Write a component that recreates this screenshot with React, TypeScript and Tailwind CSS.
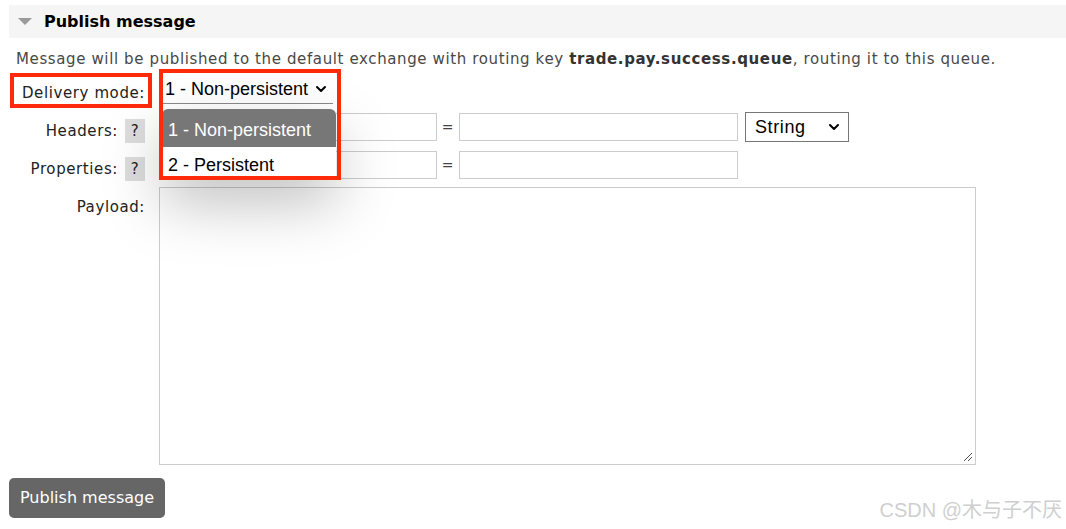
import { ChevronDown } from "lucide-react";

const verdana = "font-['DejaVu_Sans',Verdana,sans-serif]";
const arial = "font-['Liberation_Sans',Arial,sans-serif]";

function Help() {
  return (
    <span className="flex h-6 w-5 items-center justify-center bg-[#dddddd] text-[15px] text-[#222]">?</span>
  );
}

function PairInputs({ withType }: { withType?: boolean }) {
  return (
    <div className="flex items-center">
      <div className="h-[28px] w-[278px] border border-[#cccccc] bg-white" />
      <span className="w-[22px] text-center text-[14px] text-[#444]">=</span>
      <div className="h-[28px] w-[279px] border border-[#cccccc] bg-white" />
      {withType && (
        <div className={`${arial} ml-[7px] flex h-[30px] w-[104px] items-center justify-between border border-[#767676] bg-white pl-[9px] pr-[6px] text-[18px] text-black`}>
          String
          <ChevronDown className="h-4 w-4" strokeWidth={3} />
        </div>
      )}
    </div>
  );
}

export default function App() {
  return (
    <div className={`${verdana} relative h-[529px] w-[1066px] overflow-hidden bg-white text-[#484848]`}>
      <div className="pl-[9px] pt-[5px]">
        <div className="flex h-[33px] items-center bg-[#f5f5f5] pl-[9px]">
          <svg width="14" height="8" viewBox="0 0 14 8" className="mt-[1px]">
            <polygon points="0,0 14,0 7,7" fill="#9a9a9a" />
          </svg>
          <span className="ml-[12px] text-[16px] font-bold text-black">Publish message</span>
        </div>
        <p className="mt-[11px] pl-[7px] text-[15px] leading-[21px] tracking-[0.62px]">
          Message will be published to the default exchange with routing key{" "}
          <b className="text-[#333]">trade.pay.success.queue</b>, routing it to this queue.
        </p>
      </div>

      <div className="mt-[4px] flex flex-col pl-[10px] text-[15px] tracking-[0.6px] text-[#222]">
        {/* Delivery mode */}
        <div className="flex h-[38px] items-start">
          <div className="mt-[-1px] flex h-[35px] w-[142px] items-center justify-end border-4 border-[#ff2a0a] pr-[3px] pt-[5px]">
            Delivery mode:
          </div>
          <div className="relative ml-[7px]">
            <div className={`${arial} mt-[-1px] flex h-[31px] w-[174px] items-center justify-between border-b border-[#8a8a8a] pl-[6px] pr-[4px] pt-[2px] text-[18px] tracking-normal text-black`}>
              1 - Non-persistent
              <ChevronDown className="h-4 w-4" strokeWidth={3} />
            </div>
            <div className={`${arial} absolute left-[3px] top-[35px] z-10 w-[174px] overflow-hidden rounded-t-[6px] bg-white text-[18px] tracking-normal shadow-[0_25px_60px_rgba(0,0,0,0.25)]`}>
              <div className="flex h-[38px] items-center bg-[#777777] pl-[6px] pt-[4px] text-white">1 - Non-persistent</div>
              <div className="flex h-[31px] items-center pl-[6px] pt-[6px] text-black">2 - Persistent</div>
            </div>
            <div className="pointer-events-none absolute left-0 top-[-5px] z-20 h-[111px] w-[182px] border-4 border-[#ff2a0a]" />
          </div>
        </div>

        {/* Headers */}
        <div className="flex h-[39px] items-start">
          <div className="flex h-[31px] w-[142px] items-end justify-end gap-[7px] pr-[7px]">
            <span className="pb-[1px]">Headers:</span>
            <Help />
          </div>
          <div className="ml-[7px]">
            <PairInputs withType />
          </div>
        </div>

        {/* Properties */}
        <div className="flex h-[36px] items-start">
          <div className="flex h-[30px] w-[142px] items-end justify-end gap-[7px] pr-[7px]">
            <span className="pb-[1px]">Properties:</span>
            <Help />
          </div>
          <div className="ml-[7px]">
            <PairInputs />
          </div>
        </div>

        {/* Payload */}
        <div className="flex items-start">
          <div className="w-[142px] pr-[7px] pt-[9px] text-right">Payload:</div>
          <div className="relative ml-[7px] h-[278px] w-[817px] border border-[#cccccc] bg-white">
            <svg width="10" height="10" viewBox="0 0 10 10" className="absolute bottom-[2px] right-[2px]">
              <line x1="1" y1="9" x2="9" y2="1" stroke="#555" strokeWidth="1" />
              <line x1="5" y1="9" x2="9" y2="5" stroke="#555" strokeWidth="1" />
            </svg>
          </div>
        </div>
      </div>

      <div className="pl-[9px] pt-[13px]">
        <button className="h-[40px] rounded-[5px] bg-[#666666] px-[11px] text-[16px] text-white">
          Publish message
        </button>
      </div>

      <div className="absolute bottom-[4px] right-[4px] font-['Liberation_Sans','Noto_Sans_CJK_SC',sans-serif] text-[20px] text-[#cfcfcf]">
        CSDN @木与子不厌
      </div>
    </div>
  );
}
